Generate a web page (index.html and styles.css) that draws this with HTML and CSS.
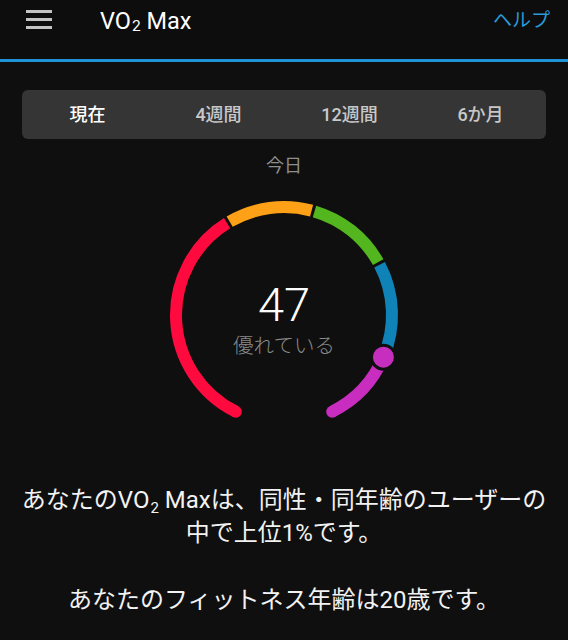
FILE: index.html
```html
<!DOCTYPE html>
<html lang="ja">
<head>
<meta charset="utf-8">
<link rel="stylesheet" href="styles.css">
</head>
<body>
<header class="appbar">
  <div class="menu" aria-label="menu"><span></span><span></span><span></span></div>
  <div class="title">VO<span class="sub">2</span> Max</div>
  <div class="help">ヘルプ</div>
</header>
<nav class="tabs">
  <div class="tab active">現在</div>
  <div class="tab">4週間</div>
  <div class="tab">12週間</div>
  <div class="tab">6か月</div>
</nav>
<div class="today">今日</div>
<div class="gauge">
  <svg class="ring" width="260" height="260" viewBox="0 0 260 260">
    <g fill="none" stroke-width="12">
      <path stroke="#ff0a3f" d="M81.81 226.65 A108 108 0 0 1 73.08 38.21"/>
      <path stroke="#ffa116" d="M75.68 36.66 A108 108 0 0 1 157.58 25.59"/>
      <path stroke="#53b61e" d="M160.49 26.40 A108 108 0 0 1 224.19 77.15"/>
      <path stroke="#0f83b7" d="M225.62 79.80 A108 108 0 0 1 229.41 172.20"/>
      <path stroke="#c92dbf" d="M229.41 172.20 A108 108 0 0 1 178.19 226.65"/>
    </g>
    <circle cx="81.81" cy="226.65" r="6" fill="#ff0a3f"/>
    <circle cx="178.19" cy="226.65" r="6" fill="#c92dbf"/>
    <circle cx="229.41" cy="172.20" r="12" fill="#c62fbe" stroke="#0f0f0f" stroke-width="3"/>
  </svg>
  <div class="readout">
    <div class="value">47</div>
    <div class="label">優れている</div>
  </div>
</div>
<p class="msg first">あなたのVO<span class="sub2">2</span> Maxは、同性・同年齢のユーザーの<br>中で上位1%です。</p>
<p class="msg second">あなたのフィットネス年齢は20歳です。</p>
</body>
</html>
```
FILE: styles.css
```css
html, body {
  margin: 0;
  padding: 0;
  background: #0f0f0f;
}
body {
  width: 568px;
  height: 640px;
  overflow: hidden;
  font-family: Roboto, "Noto Sans CJK JP", sans-serif;
  color: #f2f2f2;
}
.appbar {
  height: 59px;
  border-bottom: 3px solid #1e93d6;
  display: flex;
  align-items: flex-start;
  background: #0d0d0d;
}
.menu {
  margin: 10px 0 0 26px;
  width: 26px;
  display: flex;
  flex-direction: column;
  gap: 5px;
}
.menu span {
  display: block;
  height: 3px;
  background: #c4c4c4;
}
.title {
  margin: 6px 0 0 48px;
  font-size: 23.5px;
  line-height: 30px;
  color: #ffffff;
}
.title .sub {
  font-size: 15.5px;
  position: relative;
  top: 2px;
  margin-left: 1px;
}
.help {
  margin: 6px 18px 0 auto;
  font-size: 19px;
  line-height: 30px;
  color: #2a9bdb;
}
.tabs {
  margin: 28px 22px 0 22px;
  height: 49px;
  background: #353535;
  border-radius: 6px;
  display: grid;
  grid-template-columns: repeat(4, 1fr);
  align-items: center;
}
.tab {
  text-align: center;
  font-size: 18px;
  line-height: 24px;
  color: #c8c8c8;
  font-weight: 500;
}
.tab.active {
  color: #ffffff;
}
.today {
  margin-top: 15px;
  text-align: center;
  font-size: 18px;
  line-height: 24px;
  color: #8e8e8e;
}
.gauge {
  position: relative;
  width: 260px;
  height: 260px;
  margin: 7px auto 0 auto;
}
.ring {
  display: block;
}
.readout {
  position: absolute;
  left: 0;
  right: 0;
  top: 95px;
  display: flex;
  flex-direction: column;
  align-items: center;
  gap: 4px;
}
.value {
  font-size: 47px;
  line-height: 50px;
  font-weight: 300;
  color: #ffffff;
}
.label {
  font-size: 20.5px;
  line-height: 24px;
  font-weight: 300;
  color: #8a8a8a;
}
.msg {
  margin: 0;
  text-align: center;
  font-size: 24px;
  line-height: 30px;
  color: #f2f2f2;
}
.msg.first {
  margin-top: 40px;
}
.msg.second {
  margin-top: 37px;
}
.sub2 {
  font-size: 15px;
  position: relative;
  top: 5px;
  margin-left: 1px;
}
```
